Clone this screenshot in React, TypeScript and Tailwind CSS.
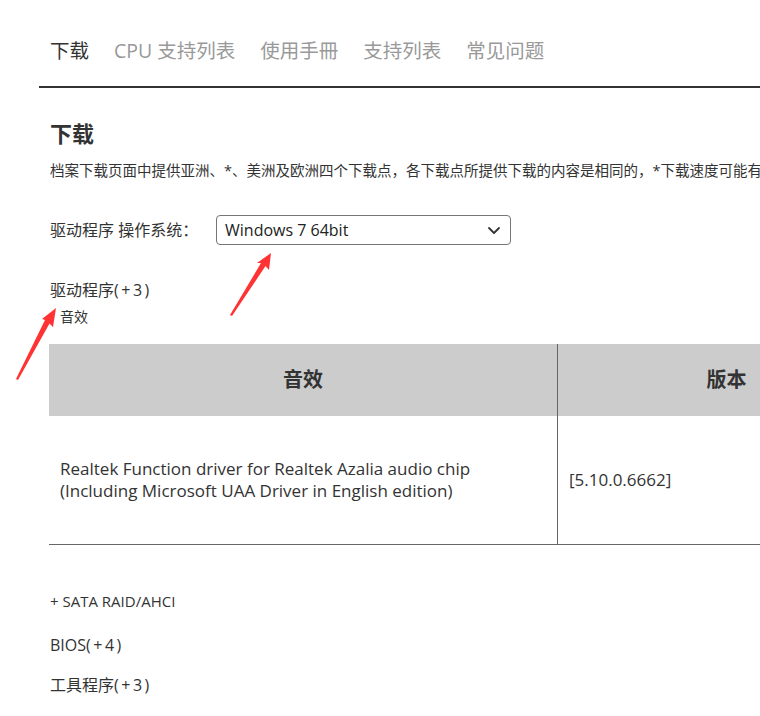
import React from "react";

const font = { fontFamily: '"Open Sans", "Noto Sans CJK SC", sans-serif' };

export default function App() {
  return (
    <div className="relative w-[760px] h-[716px] overflow-hidden bg-white text-[#333]" style={font}>
      <div className="pl-[39px] w-[1200px]">
        <div className="flex gap-[25px] pl-[11px] pt-[37px] pb-[21px] border-b-2 border-[#333] text-[19.5px] leading-[28px]">
          <span className="text-[#333]">下载</span>
          <span className="text-[#999]">CPU 支持列表</span>
          <span className="text-[#999]">使用手冊</span>
          <span className="text-[#999]">支持列表</span>
          <span className="text-[#999]">常见问题</span>
        </div>
        <div className="pl-[11px]">
          <h2 className="mt-[30px] text-[22px] leading-[30px] font-bold">下载</h2>
          <p className="mt-[13px] text-[14.5px] leading-[20px] whitespace-nowrap">
            档案下载页面中提供亚洲、*、美洲及欧洲四个下载点，各下载点所提供下载的内容是相同的，*下载速度可能有所不同，请选择离您最近的下载点。
          </p>
          <div className="mt-[34px] flex items-center h-[30px]">
            <span className="text-[16px] leading-[24px] w-[166px]">驱动程序 操作系统：</span>
            <div className="flex items-center justify-between w-[295px] h-[30px] border border-[#767676] rounded-[4px] pl-[8px] pr-[9px]">
              <span className="text-[16px] leading-[24px] text-[#222]">Windows 7 64bit</span>
              <svg width="14" height="14" viewBox="0 0 14 14" fill="none">
                <path d="M2 5 L7 10 L12 5" stroke="#333" strokeWidth="1.8" strokeLinecap="round" strokeLinejoin="round" />
              </svg>
            </div>
          </div>
          <div className="mt-[33px] text-[16px] leading-[24px]">
            驱动程序<span className="tracking-[2.5px]">(+3)</span>
          </div>
          <div className="mt-[6px] pl-[10px] text-[14px] leading-[18px]">音效</div>
          <div className="mt-[18px] ml-[-1px] w-[846px] flex flex-col">
            <div className="flex h-[72px] bg-[#ccc] text-[20px] font-bold">
              <div className="w-[509px] flex items-center justify-center border-r border-[#666]">音效</div>
              <div className="flex-1 flex items-center justify-center">版本</div>
            </div>
            <div className="flex h-[129px] border-b border-[#666] text-[17px] leading-[22px]">
              <div className="w-[509px] flex items-center px-[11px] border-r border-[#666]">
                <div>
                  Realtek Function driver for Realtek Azalia audio chip
                  <br />
                  (Including Microsoft UAA Driver in English edition)
                </div>
              </div>
              <div className="flex-1 flex items-center px-[11px]">[5.10.0.6662]</div>
            </div>
          </div>
          <div className="mt-[47px] text-[15px] leading-[18px]">+ SATA RAID/AHCI</div>
          <div className="mt-[23px] text-[16px] leading-[24px]">
            BIOS<span className="tracking-[2.5px]">(+4)</span>
          </div>
          <div className="mt-[16px] text-[16px] leading-[24px]">
            工具程序<span className="tracking-[2.5px]">(+3)</span>
          </div>
        </div>
      </div>
      <svg className="absolute left-0 top-0 pointer-events-none" width="760" height="716" viewBox="0 0 760 716">
        <polygon points="56,308 53,327 49.5,323.5 18,380 16,379 45,320 42,319" fill="#ff3333" />
        <polygon points="271,253 269,270 265.5,266 232,316 230,315 261,263 257,263" fill="#ff3333" />
      </svg>
    </div>
  );
}
